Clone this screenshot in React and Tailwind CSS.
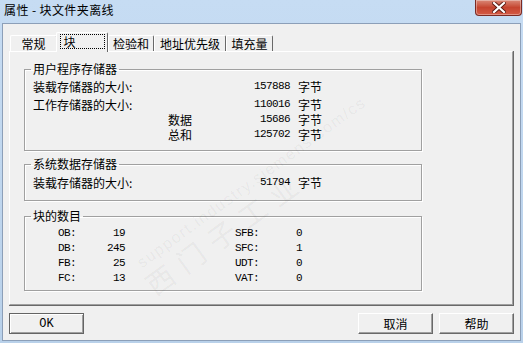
import React from 'react';

const cjk = "font-['SimSun','Noto_Sans_CJK_SC','Liberation_Sans',sans-serif]";
const mono = "font-['Liberation_Mono','DejaVu_Sans_Mono',monospace]";

const Group = ({ title, className, children }) => (
  <fieldset
    className={`ml-[14px] w-[398px] border border-[#a0a0a0] shadow-[inset_1px_1px_0_#fff,1px_1px_0_#fff] ${className}`}
  >
    <legend className={`ml-[6px] px-[2px] text-[12px] leading-[14px] text-[#000] ${cjk}`}>{title}</legend>
    {children}
  </fieldset>
);

const SizeRow = ({ label, value, indent = 'pl-[8px]', className = '' }) => (
  <div className={`flex h-[15px] items-center ${className}`}>
    <div className="flex w-[265px] items-center justify-between">
      <span className={`${indent} text-[12px] leading-[15px] ${cjk}`}>{label}</span>
      <span className={`text-[11px] leading-[15px] tracking-[-0.6px] ${mono}`}>{value}</span>
    </div>
    <span className={`ml-[8px] text-[12px] leading-[15px] ${cjk}`}>字节</span>
  </div>
);

const CountRow = ({ a, av, b, bv }) => (
  <div className={`flex h-[15px] items-center text-[11px] leading-[15px] tracking-[-0.6px] ${mono}`}>
    <div className="flex w-[100px] justify-between pl-[33px]">
      <span>{a}</span>
      <span>{av}</span>
    </div>
    <div className="ml-[110px] flex w-[67px] justify-between">
      <span>{b}</span>
      <span>{bv}</span>
    </div>
  </div>
);

const Tab = ({ label, width, active }) =>
  active ? (
    <div
      className={`relative z-10 -mb-px flex h-[20px] items-start justify-center rounded-t-[2px] border-l border-t border-r border-l-white border-t-white border-r-[#696969] bg-[#f0f0f0] pt-[1px] ${width}`}
    >
      <span className={`h-[15px] w-[45px] border border-dotted border-black pl-[3px] text-left text-[12px] leading-[13px] ${cjk}`}>{label}</span>
    </div>
  ) : (
    <div
      className={`flex h-[16px] items-center justify-center rounded-t-[2px] border-l border-t border-r border-l-white border-t-white border-r-[#696969] text-[12px] leading-[14px] ${cjk} ${width}`}
    >
      {label}
    </div>
  );

const Button = ({ children, className = '', strong }) => (
  <button
    className={`flex h-[21px] w-[75px] items-center justify-center border ${
      strong ? 'border-[#646464] shadow-[inset_1px_1px_0_#fff,inset_-1px_-1px_0_#a0a0a0]' : 'border-t-white border-l-white border-r-[#696969] border-b-[#696969] shadow-[inset_-1px_-1px_0_#a0a0a0]'
    } bg-[#f0f0f0] text-[12px] text-black ${className}`}
  >
    {children}
  </button>
);

export default function App() {
  return (
    <div className="flex h-[343px] w-[523px] flex-col overflow-hidden bg-gradient-to-b from-[#c6dcf3] to-[#b9d1ea] px-[2px] pb-[2px]">
      {/* title bar */}
      <div className="flex h-[23px] shrink-0 items-start justify-between">
        <span className={`pl-[2px] pt-[3px] text-[12px] leading-[14px] tracking-[0.4px] text-black ${cjk}`}>属性 - 块文件夹离线</span>
        <div className="mr-[-1px] flex h-[16px] w-[47px] items-center justify-center rounded-b-[4px] border border-t-0 border-[#7a2a23] bg-gradient-to-b from-[#d98877] via-[#c5442f] to-[#d45a45] shadow-[inset_0_0_0_1px_rgba(255,255,255,0.35)]">
          <svg width="14" height="11" viewBox="0 0 14 11">
            <path d="M2 1 L12 10 M12 1 L2 10" stroke="#5a1a12" strokeWidth="4" strokeLinecap="square" />
            <path d="M2 1 L12 10 M12 1 L2 10" stroke="#fff" strokeWidth="2.2" strokeLinecap="square" />
          </svg>
        </div>
      </div>

      {/* client area */}
      <div className="flex h-[318px] w-[519px] flex-col border border-[#8c9fb8] bg-[#f0f0f0]">
        <div className="flex items-end pl-[7px] pt-[8px]">
          <Tab label="常规" width="w-[47px]" />
          <Tab label="块" width="w-[52px] -ml-px" active />
          <Tab label="检验和" width="w-[46px]" />
          <Tab label="地址优先级" width="w-[72px]" />
          <Tab label="填充量" width="w-[47px]" />
        </div>

        <div className="relative ml-[6px] h-[255px] w-[505px] overflow-hidden border-r border-b border-[#696969]">
          <div className="h-full w-full border-l border-t border-r border-b border-l-white border-t-white border-r-[#a0a0a0] border-b-[#a0a0a0] pt-[10px]">
            <Group title="用户程序存储器" className="pt-[3px] pb-[8px]">
              <SizeRow label="装载存储器的大小:" value="157888" />
              <SizeRow label="工作存储器的大小:" value="110016" className="mt-[3px]" />
              <SizeRow label="数据" value="15686" indent="pl-[143px]" />
              <SizeRow label="总和" value="125702" indent="pl-[143px]" />
            </Group>

            <Group title="系统数据存储器" className="mt-[6px] pt-[4px] pb-[10px]">
              <SizeRow label="装载存储器的大小:" value="51794" />
            </Group>

            <Group title="块的数目" className="mt-[8px] pt-[3px] pb-[4px]">
              <CountRow a="OB:" av="19" b="SFB:" bv="0" />
              <CountRow a="DB:" av="245" b="SFC:" bv="1" />
              <CountRow a="FB:" av="25" b="UDT:" bv="0" />
              <CountRow a="FC:" av="13" b="VAT:" bv="0" />
            </Group>
          </div>

          {/* watermark */}
          <div className="pointer-events-none absolute left-[134px] top-[205px] origin-left -rotate-[36deg] select-none whitespace-nowrap">
            <div className="pl-[6px] font-['Liberation_Sans',sans-serif] text-[16px] leading-[18px] tracking-[1.5px] text-black/[0.05]">support.industry.siemens.com/cs</div>
            <div className={`text-[28px] leading-[30px] tracking-[10px] text-black/[0.05] ${cjk}`}>西门子工业</div>
          </div>
        </div>

        <div className="mt-[7px] flex items-center px-[6px]">
          <Button strong className={mono}>OK</Button>
          <div className="ml-auto flex gap-[6px]">
            <Button className={cjk}>取消</Button>
            <Button className={cjk}>帮助</Button>
          </div>
        </div>
      </div>
    </div>
  );
}
